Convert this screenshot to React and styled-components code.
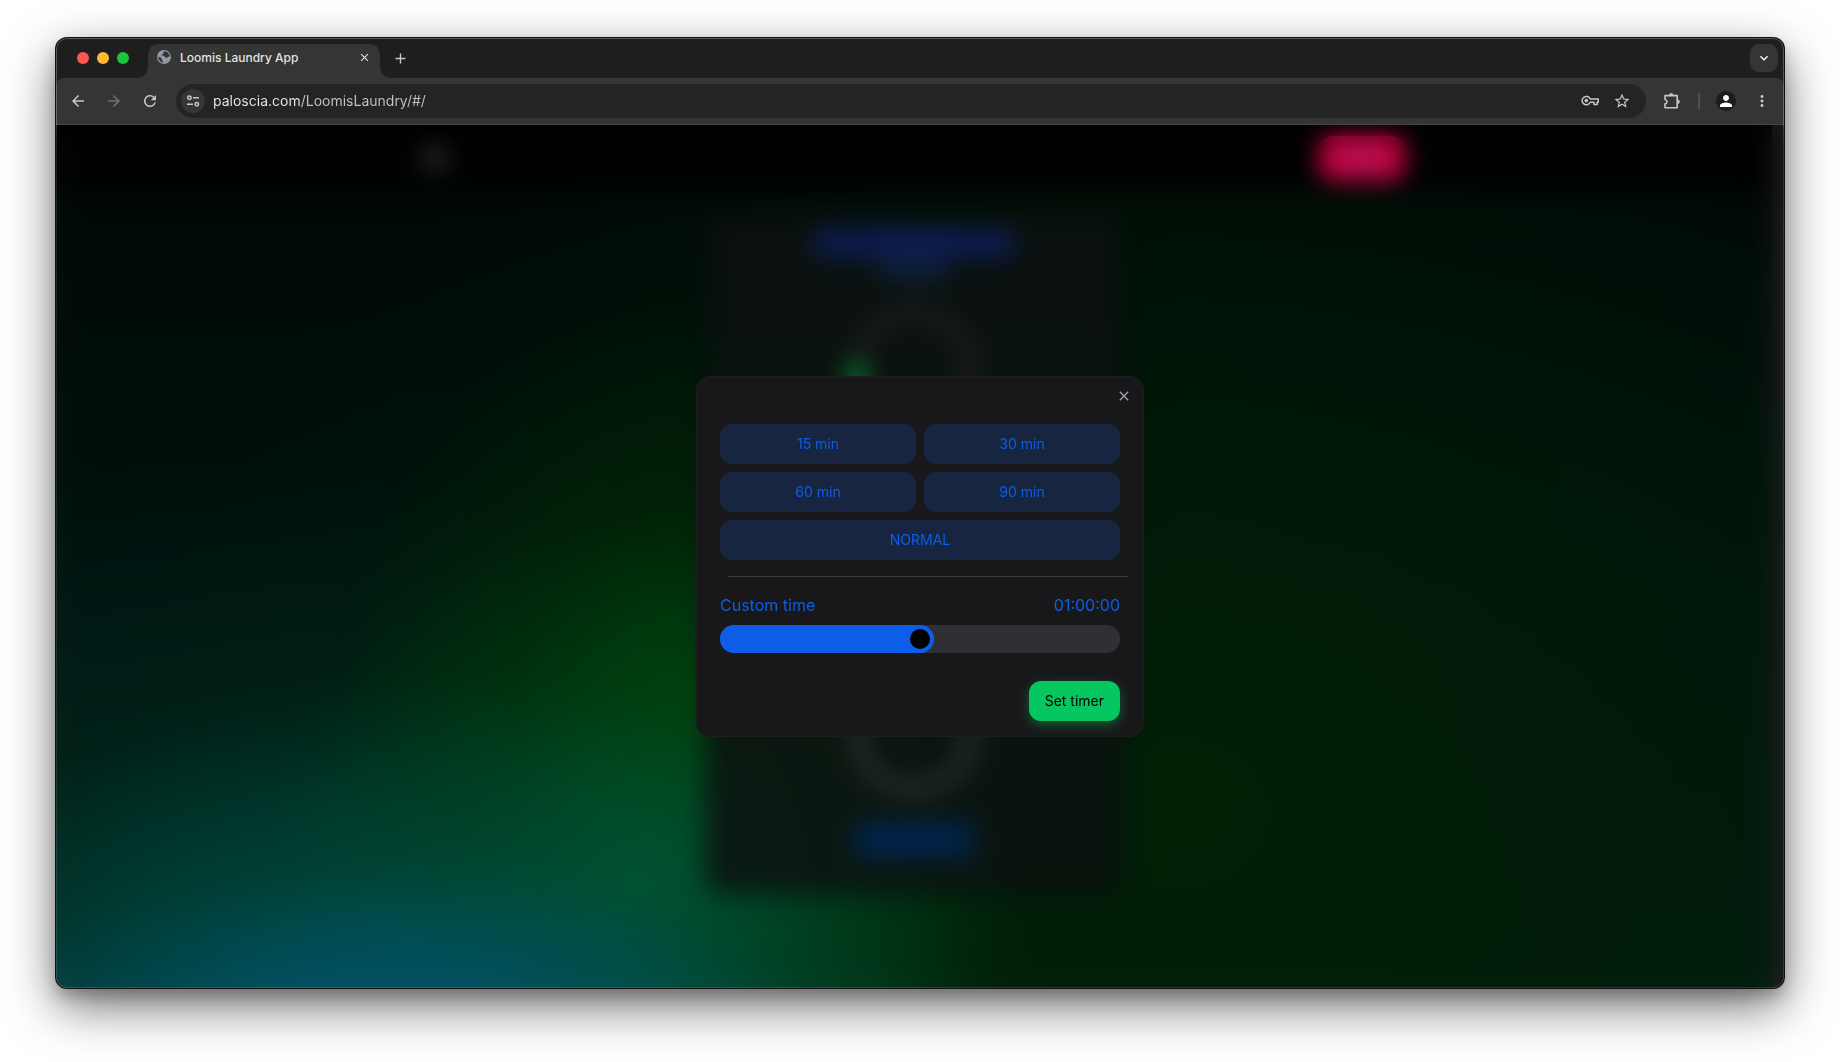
import React, { useState } from "react";
import styled, { createGlobalStyle } from "styled-components";
import {
  MdArrowBack,
  MdArrowForward,
  MdRefresh,
  MdStarBorder,
  MdAdd,
  MdClose,
  MdMoreVert,
  MdKeyboardArrowDown,
  MdPerson,
} from "react-icons/md";

const accent = "#0c5de8";

const GlobalStyle = createGlobalStyle`
  *, *::before, *::after { box-sizing: border-box; }
  body {
    margin: 0;
    background: #fff;
    font-family: Inter, Roboto, "Liberation Sans", sans-serif;
  }
  button, input { font: inherit; }
`;

const Desktop = styled.div`
  display: flex;
  min-height: 100vh;
  padding: 38px 56px 74px;
  overflow: hidden;
`;

const Window = styled.div`
  flex: 1;
  min-width: 0;
  display: flex;
  flex-direction: column;
  border-radius: 11px;
  overflow: hidden;
  position: relative;
  background: #1e1e1e;
  box-shadow: 0 0 0 1px #111, 0 18px 50px rgba(0, 0, 0, 0.56), 0 8px 16px rgba(0, 0, 0, 0.22);

  &::after {
    content: "";
    position: absolute;
    inset: 0;
    border: 1px solid rgba(255, 255, 255, 0.26);
    border-radius: 11px;
    pointer-events: none;
  }
`;

const TabStrip = styled.div`
  display: flex;
  height: 40px;
  padding: 6px 6px 0 21px;
`;

const Lights = styled.div`
  display: flex;
  align-items: center;
  gap: 8px;
  height: 28px;
  margin-right: 19px;
`;

const Light = styled.button`
  width: 12px;
  height: 12px;
  padding: 0;
  border: 0;
  border-radius: 50%;
  background: ${(p) => p.$color};
`;

const Tab = styled.div`
  display: flex;
  align-items: center;
  gap: 8px;
  width: 232px;
  height: 34px;
  margin-right: 6px;
  padding: 0 8px 8px 8px;
  position: relative;
  border-radius: 10px 10px 0 0;
  background: #353535;
  color: #e3e3e3;
  font-size: 12px;
  font-weight: 500;

  &::before,
  &::after {
    content: "";
    position: absolute;
    bottom: 0;
    width: 10px;
    height: 10px;
  }
  &::before {
    right: 100%;
    background: radial-gradient(circle at 0 0, transparent 9px, #353535 10px);
  }
  &::after {
    left: 100%;
    background: radial-gradient(circle at 100% 0, transparent 9px, #353535 10px);
  }
`;

const TabTitle = styled.span`
  flex: 1;
`;

const IconButton = styled.button`
  display: inline-flex;
  align-items: center;
  justify-content: center;
  flex: none;
  width: ${(p) => p.$size}px;
  height: ${(p) => p.$size}px;
  padding: 0;
  border: 0;
  border-radius: ${(p) => p.$radius || "50%"};
  background: ${(p) => p.$bg || "transparent"};
  color: ${(p) => p.$color || "#c7c7c7"};
`;

const Spacer = styled.div`
  flex: 1;
`;

const Toolbar = styled.div`
  display: flex;
  align-items: center;
  height: 47px;
  padding: 0 8px;
  border-bottom: 1px solid #454545;
  border-radius: 8px 8px 0 0;
  background: #353535;
`;

const NavButtons = styled.div`
  display: flex;
  gap: 8px;
  margin-right: 12px;
`;

const Omnibox = styled.form`
  flex: 1;
  display: flex;
  align-items: center;
  gap: 4px;
  height: 34px;
  padding: 0 10px 0 5px;
  border-radius: 17px;
  background: #242424;
`;

const Address = styled.input`
  flex: 1;
  min-width: 0;
  height: 24px;
  padding: 0 4px 2px;
  border: 0;
  outline: 0;
  background: linear-gradient(90deg, #ececec 92px, #c4c4c4 92px);
  background-clip: text;
  -webkit-background-clip: text;
  color: transparent;
  font-size: 14px;
`;

const Actions = styled.div`
  display: flex;
  align-items: center;
  gap: 12px;
  margin-left: 12px;
`;

const AccountActions = styled.div`
  display: flex;
  align-items: center;
  gap: 8px;
`;

const Avatar = styled.span`
  display: grid;
  place-items: center;
  width: 20px;
  height: 20px;
  border-radius: 50%;
  background: #1c1c1c;
  color: #fff;
`;

const Divider = styled.span`
  width: 2px;
  height: 16px;
  background: #505050;
`;

const Viewport = styled.main`
  flex: 1;
  display: grid;
  grid-template: minmax(0, 1fr) / minmax(0, 1fr);
  overflow: hidden;
  background: #000;

  > * {
    grid-area: 1 / 1;
  }
`;

const Site = styled.div`
  display: flex;
  flex-direction: column;
  border-right: 12px solid #191919;
  background:
    radial-gradient(26% 17% at 18% 104%, rgba(0, 80, 112, 0.9), rgba(0, 78, 106, 0.45) 50%, transparent),
    radial-gradient(32% 38% at 22% 102%, rgba(0, 84, 84, 0.95), rgba(0, 76, 66, 0.5) 50%, transparent),
    radial-gradient(22% 42% at 34% 88%, rgba(0, 88, 38, 0.95), rgba(0, 72, 22, 0.5) 50%, transparent),
    radial-gradient(22% 48% at 38% 68%, rgba(0, 66, 6, 0.9), rgba(0, 46, 4, 0.45) 50%, transparent),
    radial-gradient(46% 60% at 12% 100%, rgba(0, 66, 56, 0.8), rgba(0, 46, 34, 0.4) 50%, transparent),
    radial-gradient(60% 90% at 64% 78%, rgba(0, 32, 4, 0.95), rgba(0, 28, 6, 0.7) 50%, transparent),
    linear-gradient(180deg, #000604, #001410 60%, #001c12);
`;

const SiteHeader = styled.header`
  display: flex;
  align-items: center;
  justify-content: space-between;
  height: 65px;
  padding: 0 367px;
  background: rgba(0, 0, 0, 0.86);
`;

const SiteLogo = styled.span`
  width: 24px;
  height: 24px;
  border-radius: 50%;
  background: #303030;
`;

const SignOut = styled.span`
  width: 86px;
  height: 44px;
  border-radius: 14px;
  background: radial-gradient(#a81c64, #cc003e 60%);
`;

const MachineCard = styled.section`
  display: flex;
  flex-direction: column;
  align-items: center;
  width: 412px;
  height: 676px;
  margin: 24px auto 0;
  padding: 16px 0 32px;
  border-radius: 14px;
  background: rgba(12, 17, 16, 0.86);
  box-shadow: 0 4px 16px rgba(0, 10, 20, 0.6);
`;

const CardTitle = styled.span`
  width: 200px;
  height: 26px;
  border-radius: 6px;
  background: #0d1c58;
`;

const CardSubtitle = styled.span`
  width: 68px;
  height: 24px;
  margin-bottom: 24px;
  background: #0d2038;
`;

const Dial = styled.span`
  width: 132px;
  height: 132px;
  margin-bottom: ${(p) => p.$gap}px;
  border: 18px solid ${(p) => p.$color};
  border-radius: 50%;
`;

const DialMark = styled.span`
  display: block;
  width: 22px;
  height: 26px;
  margin: 42px 0 0 -20px;
  border-radius: 50%;
  background: #008c34;
`;

const CardAction = styled.span`
  width: 120px;
  height: 36px;
  border-radius: 12px;
  background: #00244c;
`;

const Overlay = styled.div`
  display: grid;
  place-items: center;
  z-index: 1;
  backdrop-filter: blur(12px);
`;

const Dialog = styled.section`
  width: 448px;
  padding: 7px 23px 15px;
  border: 1px solid #1e1e20;
  border-radius: 14px;
  background: #18181a;
  color: ${accent};
`;

const DialogTop = styled.div`
  display: flex;
  justify-content: flex-end;
  height: 40px;
  margin-right: -16px;
`;

const Presets = styled.div`
  display: grid;
  grid-template-columns: 1fr 1fr;
  gap: 8px;
`;

const Preset = styled.button`
  grid-column: ${(p) => (p.$wide ? "1 / -1" : "auto")};
  height: 40px;
  padding: 0 16px 2px;
  border: 0;
  border-radius: 12px;
  background: #172541;
  color: ${accent};
  font-size: 14px;
`;

const Rule = styled.hr`
  width: 100%;
  height: 1px;
  margin: 16px 8px;
  border: 0;
  background: #3a3a3d;
`;

const FieldRow = styled.div`
  display: flex;
  justify-content: space-between;
  margin-bottom: 8px;
  font-size: 16px;
  line-height: 24px;
`;

const Slider = styled.input`
  appearance: none;
  display: block;
  width: 100%;
  height: 28px;
  margin: 0 0 28px;
  border-radius: 14px;
  background: linear-gradient(90deg, ${accent} var(--fill), #303034 var(--fill));

  &::-webkit-slider-thumb {
    appearance: none;
    width: 28px;
    height: 28px;
    border: 4px solid ${accent};
    border-radius: 50%;
    background: #000;
  }
`;

const DialogFooter = styled.div`
  display: flex;
  justify-content: flex-end;
`;

const Submit = styled.button`
  height: 40px;
  padding: 0 16px 2px;
  border: 0;
  border-radius: 12px;
  background: #06c65f;
  box-shadow: 0 4px 12px rgba(6, 198, 95, 0.4);
  color: #000;
  font-size: 14px;
`;

const GlobeIcon = () => (
  <svg width="16" height="16" viewBox="0 0 16 16">
    <circle cx="8" cy="8" r="7" fill="#9299a3" />
    <path
      d="M8.8 2.2c-1 .4-1.7 1-1.4 2 .2.7-.6 1.1-1.300 1.200-.6.1-.5.9-.9 1.200 1.500.2 3 0 3.600 1.200.4.9 1.400 1 2.300.8 1.200-.2 1.600-1.200 2.700-1.300-.1-2.600-2.200-4.800-5-5.100zM2.200 7.600c.9.600 2.300.8 3 1.500.8.8.2 1.800 1 2.300.9.500.6 1.500.8 2.300-2.900-.4-4.900-3-4.800-6.100z"
      fill="#353535"
    />
  </svg>
);

const TuneIcon = () => (
  <svg width="14" height="14" viewBox="0 0 14 14" fill="none" stroke="currentColor" strokeWidth="1.5">
    <circle cx="3.4" cy="3.7" r="1.7" />
    <path d="M7 3.7h6M1 10.3h6" />
    <circle cx="10.8" cy="10.3" r="1.7" />
  </svg>
);

const KeyIcon = () => (
  <svg width="18" height="18" viewBox="0 0 18 18" fill="none" stroke="currentColor" strokeWidth="1.5" strokeLinejoin="round">
    <path d="M9.200 7h8.100v3.200h-1.100v2.300h-3.200v-2.300H9.200A4.200 4.200 0 1 1 9.200 7z" />
    <circle cx="5.300" cy="8.600" r="1.400" fill="currentColor" strokeWidth="1" />
  </svg>
);

const PuzzleIcon = () => (
  <svg width="18" height="18" viewBox="0 0 18 18" fill="none" stroke="currentColor" strokeWidth="1.6" strokeLinejoin="round">
    <path d="M2 3.600h12.200v12.200H2v-3.900c2.600-.4 2.600-4 0-4.400z" />
    <path d="M6.200 3.200a2 2 0 0 1 4 0zM14.600 7.700a2 2 0 0 1 0 4z" fill="currentColor" strokeWidth="0.4" />
  </svg>
);

const presets = ["15 min", "30 min", "60 min", "90 min", "NORMAL"];

const clock = (minutes) =>
  `${String(Math.floor(minutes / 60)).padStart(2, "0")}:${String(minutes % 60).padStart(2, "0")}:00`;

export default function App() {
  const [minutes, setMinutes] = useState(60);

  return (
    <>
      <GlobalStyle />
      <Desktop>
        <Window>
          <TabStrip>
            <Lights>
              <Light $color="#ff5650" aria-label="Close window" />
              <Light $color="#ffb935" aria-label="Minimize window" />
              <Light $color="#1fc33f" aria-label="Zoom window" />
            </Lights>
            <Tab>
              <GlobeIcon />
              <TabTitle>Loomis Laundry App</TabTitle>
              <IconButton $size={16} $color="#e3e3e3" aria-label="Close tab">
                <MdClose size={13} />
              </IconButton>
            </Tab>
            <IconButton $size={28} aria-label="New tab">
              <MdAdd size={17} />
            </IconButton>
            <Spacer />
            <IconButton $size={28} $radius="9px" $bg="#353535" $color="#fff" aria-label="Search tabs">
              <MdKeyboardArrowDown size={16} />
            </IconButton>
          </TabStrip>
          <Toolbar>
            <NavButtons>
              <IconButton $size={28} aria-label="Back"><MdArrowBack size={18} /></IconButton>
              <IconButton $size={28} $color="#707070" aria-label="Forward"><MdArrowForward size={18} /></IconButton>
              <IconButton $size={28} aria-label="Reload"><MdRefresh size={18} /></IconButton>
            </NavButtons>
            <Omnibox onSubmit={(e) => e.preventDefault()}>
              <IconButton $size={24} $bg="#363636" type="button" aria-label="Site information"><TuneIcon /></IconButton>
              <Address aria-label="Address" defaultValue="paloscia.com/LoomisLaundry/#/" />
              <IconButton $size={28} type="button" aria-label="Passwords"><KeyIcon /></IconButton>
              <IconButton $size={28} type="button" aria-label="Bookmark"><MdStarBorder size={18} /></IconButton>
            </Omnibox>
            <Actions>
              <IconButton $size={28} aria-label="Extensions"><PuzzleIcon /></IconButton>
              <Divider />
              <AccountActions>
                <IconButton $size={28} aria-label="Profile">
                  <Avatar><MdPerson size={18} /></Avatar>
                </IconButton>
                <IconButton $size={28} aria-label="Menu"><MdMoreVert size={18} /></IconButton>
              </AccountActions>
            </Actions>
          </Toolbar>
          <Viewport>
            <Site aria-hidden="true">
              <SiteHeader>
                <SiteLogo />
                <SignOut />
              </SiteHeader>
              <MachineCard>
                <CardTitle />
                <CardSubtitle />
                <Dial $color="#1a1c1c" $gap={232}><DialMark /></Dial>
                <Dial $color="#242a26" $gap={24} />
                <CardAction />
              </MachineCard>
            </Site>
            <Overlay>
              <Dialog role="dialog" aria-label="Set timer">
                <DialogTop>
                  <IconButton $size={24} $color="#a1a1aa" aria-label="Close"><MdClose size={16} /></IconButton>
                </DialogTop>
                <Presets>
                  {presets.map((name) => (
                    <Preset key={name} $wide={name === "NORMAL"}>{name}</Preset>
                  ))}
                </Presets>
                <Rule />
                <FieldRow>
                  <label htmlFor="custom-time">Custom time</label>
                  <output htmlFor="custom-time">{clock(minutes)}</output>
                </FieldRow>
                <Slider
                  id="custom-time"
                  type="range"
                  min="0"
                  max="120"
                  value={minutes}
                  onChange={(e) => setMinutes(Number(e.target.value))}
                  style={{ "--fill": `${(minutes / 120) * 100}%` }}
                />
                <DialogFooter>
                  <Submit>Set timer</Submit>
                </DialogFooter>
              </Dialog>
            </Overlay>
          </Viewport>
        </Window>
      </Desktop>
    </>
  );
}
